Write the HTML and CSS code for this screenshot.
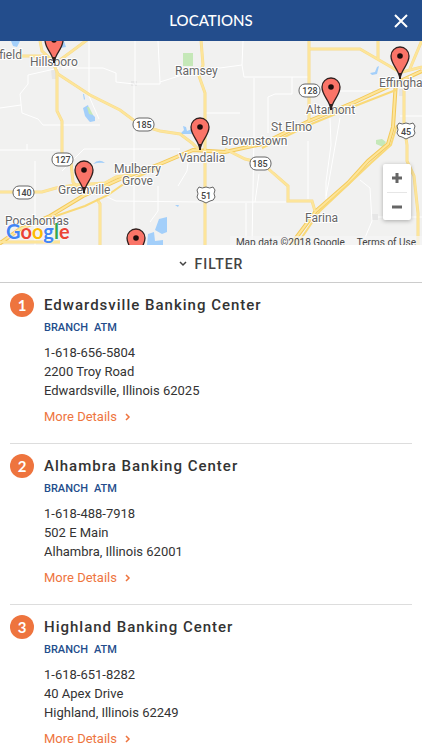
FILE: index.html
```html
<!DOCTYPE html>
<html lang="en">
<head>
    <meta charset="UTF-8">
    <meta name="viewport" content="width=device-width, initial-scale=1.0">
    <title>Locations</title>
    <link rel="stylesheet" href="styles.css">
</head>
<body>
    <header class="top-bar">
        <h1>LOCATIONS</h1>
        <button type="button" class="close-button" aria-label="Close">
            <svg width="16" height="16" viewBox="0 0 16 16"><path d="M2 2 L14 14 M14 2 L2 14"/></svg>
        </button>
    </header>

    <section class="map" aria-label="Map">
        <svg class="map-canvas" viewBox="0 0 422 204" preserveAspectRatio="xMidYMid slice">
            <defs>
                <g id="pin">
                    <path d="M0 0 C-1 -10 -9 -14 -9 -23 A9 9 0 0 1 9 -23 C9 -14 1 -10 0 0 Z" fill="#fa7468" stroke="#31201f" stroke-width="1.3"/>
                    <path d="M0 0 V-6" stroke="#31201f" stroke-width="2"/>
                    <circle cy="-23" r="2.8" fill="#1c0d0c"/>
                </g>
            </defs>

            <!-- lakes and parks -->
            <g fill="#a3cffa">
                <path d="M83 67 l5 -3 2 7 5 5 v4 l-5 1 -1 -1 -4 -5z M83 53 h1 l1 5 -1 1z"/>
                <path d="M11 0 h9 l-3 6 -4 -1z M59 0 h5 l2 6 -6 1z"/>
                <path d="M180 93 l4 -4 -1 -4 3 1 1 4 5 -2 4 4 -4 1z"/>
                <path d="M370 32 l5 -1 2 -5 2 -1 -2 8 -5 1z"/>
                <path d="M93 123 q6 -6 12 -1 q-6 -1 -12 1z"/>
                <path d="M159 178 l8 -2 v15 l-5 2 -7 -4z M148 193 l6 -2 1 9 8 -1 v5 h-16z M175 164 h4 l-1 2z"/>
            </g>
            <g fill="#c5e8b8">
                <path d="M183 12 h10 v13 h-10z M87 66 h2 l4 8 -4 -1z M376 103 v-4 l6 -1 4 3 -3 5z"/>
            </g>
            <g fill="#e6e6e6">
                <path d="M51 29 h5 v9 h-4z M131 40 h6 v5 h-6z M372 173 h6 v6 h-6z M399 48 h6 v7 h-6z"/>
            </g>

            <!-- local roads -->
            <g class="road-minor">
                <path d="M59 27 L28 34 L28 43 L20 53 L22 72 L38 78 L43 84 L100 84 M0 67 L21 64 M89 0 V55 L99 78"/>
                <path d="M62 27 H103 L116 32 V41 L134 43 V204 M135 0 V43 M135 43 H160 V41 L201 28 M158 0 L160 41"/>
                <path d="M0 109 H60 M27 103 V109 M35 120 V204 M62 130 L84 108 L180 108 M105 155 L116 160 L200 161"/>
                <path d="M243 0 L242 24 L205 29 M242 24 L244 36 H290 L308 36 M254 37 V94 L252 204 M268 92 V56 L275 53 H292 V36"/>
                <path d="M309 50 H372 M340 77 L329 140 L326 155 M308 100 L308 158 M330 77 L331 104 L326 141 V158 M205 161 H286 M246 162 V204 M259 133 L255 161"/>
                <path d="M360 139 L370 147 L372 180 L362 204 M378 176 H422 M190 108 L187 130 L178 145 M158 145 V170 L150 181 M400 75 H422 M0 15 L8 14 M205 72 L240 72"/>
            </g>

            <!-- highways, casing first and filling on top -->
            <g class="road-casing">
                <path d="M18 15 H46 M40 0 L42 10 L53 20 L60 19 L87 -1 M53 22 L58 33 L90 54 L120 69 L140 84 L160 90 L180 93 L192 102 L199 109"/>
                <path d="M57 31 V70 L62 80 V113 L71 122 L73 141 L77 146"/>
                <path d="M201 -1 L203 24 L199 35 L205 52 V205 M97 158 L100 163 V205 M-1 201 H60"/>
                <path d="M-1 151 H42 L56 147 L75 144 L105 142 L116 136 L130 134"/>
                <path d="M309 -1 V80 M309 8 H360 L398 30 M378 -1 V18 M398 32 L422 26 M409 30 L422 -1"/>
                <path d="M225 108 L245 118 L262 122 L273 132 L288 145 V160 H312 L315 170"/>
                <path d="M404 38 V84 L407 104 L407 120 L414 135 L418 172 V205"/>
            </g>
            <g class="road-casing wide">
                <path d="M-1 203 L20 188 L50 175 L83 155 L118 139 L160 123 L193 109 L225 111 L262 103 L309 80 L355 61 L422 30"/>
                <path d="M396 40 L393 86 L388 103 L368 120 L348 142 L316 170 L290 205"/>
            </g>
            <g class="road-fill">
                <path d="M18 15 H46 M40 0 L42 10 L53 20 L60 19 L87 -1 M53 22 L58 33 L90 54 L120 69 L140 84 L160 90 L180 93 L192 102 L199 109"/>
                <path d="M57 31 V70 L62 80 V113 L71 122 L73 141 L77 146"/>
                <path d="M201 -1 L203 24 L199 35 L205 52 V205 M97 158 L100 163 V205 M-1 201 H60"/>
                <path d="M-1 151 H42 L56 147 L75 144 L105 142 L116 136 L130 134"/>
                <path d="M309 -1 V80 M309 8 H360 L398 30 M378 -1 V18 M398 32 L422 26 M409 30 L422 -1"/>
                <path d="M225 108 L245 118 L262 122 L273 132 L288 145 V160 H312 L315 170"/>
                <path d="M404 38 V84 L407 104 L407 120 L414 135 L418 172 V205"/>
            </g>
            <g class="road-fill wide">
                <path d="M-1 203 L20 188 L50 175 L83 155 L118 139 L160 123 L193 109 L225 111 L262 103 L309 80 L355 61 L422 30"/>
                <path d="M396 40 L393 86 L388 103 L368 120 L348 142 L316 170 L290 205"/>
            </g>
            <g class="road-side">
                <path d="M50 177 L85 165 L108 154 L128 140 L160 126 M262 107 L309 84 L355 65 L396 49 M397 84 L391 104 L371 122 L320 170 L296 205"/>
            </g>

            <!-- route shields -->
            <g class="shield">
                <rect x="133" y="77" width="21" height="13" rx="6"/><text x="144" y="87">185</text>
                <rect x="299" y="43" width="21" height="13" rx="6"/><text x="310" y="53">128</text>
                <rect x="52" y="112" width="21" height="13" rx="6"/><text x="63" y="122">127</text>
                <rect x="13" y="145" width="21" height="13" rx="6"/><text x="24" y="155">140</text>
                <rect x="250" y="116" width="21" height="13" rx="6"/><text x="260" y="126">185</text>
                <path d="M199 146 q3 2 7 0 q4 2 7 0 l2 3 q-2 4 0 7 q-1 4 -5 4 l-4 2 -4 -2 q-4 0 -5 -4 q2 -3 0 -7z"/><text x="206" y="158">51</text>
                <path d="M399 82 q3 2 7 0 q4 2 7 0 l2 3 q-2 4 0 7 q-1 4 -5 4 l-4 2 -4 -2 q-4 0 -5 -4 q2 -3 0 -7z"/><text x="406" y="94">45</text>
            </g>

            <!-- towns -->
            <g class="town">
                <text x="-27" y="18">Litchfield</text>
                <text x="30" y="25">Hillsboro</text>
                <text x="175" y="34">Ramsey</text>
                <text x="379" y="46">Effingham</text>
                <text x="306" y="73">Altamont</text>
                <text x="271" y="90">St Elmo</text>
                <text x="221" y="104">Brownstown</text>
                <text x="179" y="121">Vandalia</text>
                <text x="114" y="132">Mulberry</text>
                <text x="122" y="144">Grove</text>
                <text x="58" y="153">Greenville</text>
                <text x="5" y="184">Pocahontas</text>
                <text x="305" y="181">Farina</text>
            </g>

            <use href="#pin" x="54" y="22"/>
            <use href="#pin" x="200" y="109"/>
            <use href="#pin" x="331" y="69"/>
            <use href="#pin" x="400" y="38"/>
            <use href="#pin" x="84" y="152"/>
            <use href="#pin" x="136" y="220"/>
        </svg>

        <a class="google-logo" href="#" aria-label="Google"><span class="blue">G</span><span class="red">o</span><span class="yellow">o</span><span class="blue">g</span><span class="green">l</span><span class="red">e</span></a>
        <div class="map-credits">
            <span>Map data ©2018 Google</span>
            <a href="#">Terms of Use</a>
        </div>
        <div class="zoom-control">
            <button type="button" aria-label="Zoom in">
                <svg width="12" height="12" viewBox="0 0 12 12"><path d="M1 6 H11 M6 1 V11"/></svg>
            </button>
            <button type="button" aria-label="Zoom out">
                <svg width="12" height="12" viewBox="0 0 12 12"><path d="M1 6 H11"/></svg>
            </button>
        </div>
    </section>

    <button type="button" class="filter-button">
        <svg width="8" height="6" viewBox="0 0 8 6"><path d="M1 1 L4 4 L7 1"/></svg>
        FILTER
    </button>

    <main class="location-list">
        <article class="location">
            <span class="number">1</span>
            <div class="info">
                <h2>Edwardsville Banking Center</h2>
                <p class="services"><span>BRANCH</span><span>ATM</span></p>
                <address>
                    1-618-656-5804<br>
                    2200 Troy Road<br>
                    Edwardsville, Illinois 62025
                </address>
                <a class="details-link" href="#">More Details
                    <svg width="6" height="8" viewBox="0 0 6 8"><path d="M1 1 L4 4 L1 7"/></svg>
                </a>
            </div>
        </article>
        <article class="location">
            <span class="number">2</span>
            <div class="info">
                <h2>Alhambra Banking Center</h2>
                <p class="services"><span>BRANCH</span><span>ATM</span></p>
                <address>
                    1-618-488-7918<br>
                    502 E Main<br>
                    Alhambra, Illinois 62001
                </address>
                <a class="details-link" href="#">More Details
                    <svg width="6" height="8" viewBox="0 0 6 8"><path d="M1 1 L4 4 L1 7"/></svg>
                </a>
            </div>
        </article>
        <article class="location">
            <span class="number">3</span>
            <div class="info">
                <h2>Highland Banking Center</h2>
                <p class="services"><span>BRANCH</span><span>ATM</span></p>
                <address>
                    1-618-651-8282<br>
                    40 Apex Drive<br>
                    Highland, Illinois 62249
                </address>
                <a class="details-link" href="#">More Details
                    <svg width="6" height="8" viewBox="0 0 6 8"><path d="M1 1 L4 4 L1 7"/></svg>
                </a>
            </div>
        </article>
    </main>
</body>
</html>
```

FILE: styles.css
```css
* {
    box-sizing: border-box;
}
body {
    margin: 0;
    background-color: #fff;
    color: #333;
    font-family: Roboto, "Liberation Sans", sans-serif;
    font-size: 13px;
    line-height: 19px;
}
h1, h2, p {
    margin: 0;
}
button {
    border: none;
    padding: 0;
    background: none;
    font-family: inherit;
    cursor: pointer;
}
a {
    text-decoration: none;
}
svg {
    fill: none;
}

/* header */
.top-bar {
    display: grid;
    grid-template-columns: 1fr auto 1fr;
    align-items: center;
    padding: 10px 13px;
    background-color: #234d8c;
    color: #fff;
}
.top-bar h1 {
    grid-column: 2;
    font-family: Lato, sans-serif;
    font-size: 15px;
    font-weight: 500;
    line-height: 21px;
}
.close-button {
    display: flex;
    justify-self: end;
}
.close-button svg {
    stroke: #fff;
    stroke-width: 2;
}

/* map */
.map {
    position: relative;
    overflow: hidden;
    background-color: #f1f1f0;
}
.map-canvas {
    display: block;
    width: 100%;
    height: 204px;
}
.road-minor {
    stroke: #fff;
    stroke-width: 1;
}
.road-casing {
    stroke: #f8dc8c;
    stroke-width: 3;
}
.road-casing.wide {
    stroke: #f3c95a;
    stroke-width: 4;
}
.road-fill {
    stroke: #fde59a;
    stroke-width: 2;
}
.road-side {
    stroke: #f9d978;
    stroke-width: 2;
}
.shield rect,
.shield path {
    fill: #fff;
    stroke: #666;
    stroke-width: 1;
}
.shield text {
    fill: #444;
    font-size: 9px;
    font-weight: 500;
    text-anchor: middle;
}
.town text {
    fill: #666;
    stroke: #fff;
    stroke-width: 2;
    paint-order: stroke;
    font-size: 12px;
}
.google-logo {
    position: absolute;
    left: 6px;
    bottom: 1px;
    font-family: Lato, sans-serif;
    font-size: 20px;
    font-weight: 700;
    line-height: 26px;
    text-shadow: 0 0 1px #fff, 0 0 2px #fff;
}
.blue {
    color: #4285f4;
}
.red {
    color: #ea4335;
}
.yellow {
    color: #fbbc05;
}
.green {
    color: #34a853;
}
.map-credits {
    position: absolute;
    right: 0;
    bottom: -5px;
    display: flex;
    gap: 12px;
    padding: 0 6px;
    background-color: rgba(245, 245, 245, 0.7);
    color: #444;
    font-size: 10px;
    line-height: 14px;
}
.map-credits a {
    color: #444;
}
.zoom-control {
    position: absolute;
    right: 11px;
    bottom: 25px;
    display: flex;
    flex-direction: column;
    width: 28px;
    padding: 0 4px;
    border-radius: 2px;
    background-color: #fff;
    box-shadow: 0 1px 4px rgba(0, 0, 0, 0.3);
}
.zoom-control button {
    display: flex;
    align-items: center;
    justify-content: center;
    height: 28px;
}
.zoom-control button + button {
    border-top: 1px solid #e6e6e6;
}
.zoom-control svg {
    stroke: #666;
    stroke-width: 3;
}

/* filter */
.filter-button {
    display: flex;
    align-items: center;
    justify-content: center;
    gap: 8px;
    width: 100%;
    height: 38px;
    border-bottom: 1px solid #ccc;
    color: #444;
    font-size: 14px;
    font-weight: 500;
    letter-spacing: 1px;
}
.filter-button svg {
    stroke: #444;
    stroke-width: 1.5;
}

/* locations */
.location-list {
    padding: 0 10px;
}
.location {
    display: flex;
    gap: 10px;
    padding: 10px 0 17px;
    border-bottom: 1px solid #ddd;
}
.number {
    flex-shrink: 0;
    width: 24px;
    height: 24px;
    border-radius: 50%;
    background-color: #ee743e;
    color: #fff;
    font-family: Lato, sans-serif;
    font-size: 15px;
    font-weight: 700;
    line-height: 24px;
    text-align: center;
}
.location h2 {
    font-size: 15px;
    font-weight: 500;
    line-height: 24px;
    letter-spacing: 1px;
}
.services {
    display: flex;
    gap: 6px;
    margin-bottom: 4px;
    color: #234d8c;
    font-size: 11px;
    font-weight: 500;
    line-height: 22px;
}
.location address {
    margin-bottom: 7px;
    font-style: normal;
}
.details-link {
    display: flex;
    align-items: center;
    gap: 8px;
    color: #ee743e;
}
.details-link svg {
    stroke: #ee743e;
    stroke-width: 1.5;
}
```
